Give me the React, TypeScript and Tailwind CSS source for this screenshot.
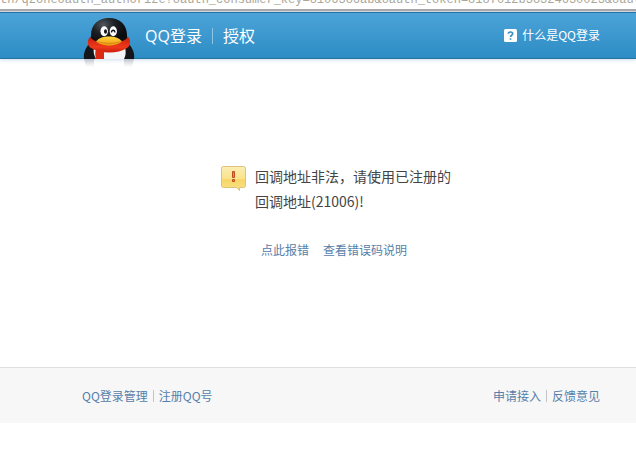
import type { ReactNode } from "react";

const requestUrl =
  "th/qzoneoauth_authorize?oauth_consumer_key=8106386ab&oauth_token=8187012b38324630023&oauth_";

const Penguin = () => (
  <svg viewBox="0 0 52 50" className="h-[50px] w-[52px] shrink-0" aria-hidden="true">
    <defs>
      <radialGradient id="head" cx="0.35" cy="0.22" r="0.6">
        <stop offset="0" stopColor="#50565e" />
        <stop offset="0.5" stopColor="#1d2024" />
        <stop offset="1" stopColor="#0b0c0f" />
      </radialGradient>
      <linearGradient id="scarf" x1="0" y1="0" x2="0" y2="1">
        <stop offset="0" stopColor="#c91d0c" />
        <stop offset="0.65" stopColor="#ee3a1c" />
        <stop offset="1" stopColor="#c91d0c" />
      </linearGradient>
      <linearGradient id="beak" x1="0" y1="0" x2="0" y2="1">
        <stop offset="0" stopColor="#ffd83f" />
        <stop offset="1" stopColor="#ee960f" />
      </linearGradient>
      <linearGradient id="reflection" x1="0" y1="0" x2="0" y2="1">
        <stop offset="0" stopColor="#9aa0a8" stopOpacity="0.5" />
        <stop offset="1" stopColor="#9aa0a8" stopOpacity="0" />
      </linearGradient>
    </defs>
    <path d="M7 25C3 29 0 35 1 41h50c1-6-2-12-6-16z" fill="#14161a" />
    <path d="M11 29h31c1 5 1 8-1 12H13c-2-4-3-7-2-12z" fill="#f4f5f7" />
    <path d="M26 0C15 0 8 7 8 17c0 3-1 3-1 5 0 3 3 7 6 8h26c3-1 6-5 6-8 0-2-1-2-1-5C44 7 37 0 26 0z" fill="url(#head)" />
    <path d="M7 19c-3 3-3 9 1 11 10 6 27 6 36 0 4-2 4-8 1-11-7 9-31 9-38 0z" fill="url(#scarf)" />
    <path d="M13 31c3 1 6 2 8 2v8h-8c-1-4-1-7 0-10z" fill="#dc2a12" />
    <path d="M13 23.500c3-4 8-5 13-5s10 1 13 5c-6 5.500-20 5.500-26 0z" fill="url(#beak)" />
    <path d="M14 23.500c8 2.500 16 2.500 24 0" fill="none" stroke="#b86a0c" strokeWidth=".5" />
    <ellipse cx="21.200" cy="13.300" rx="3.700" ry="5" fill="#fff" />
    <ellipse cx="30.300" cy="13.300" rx="3.600" ry="5" fill="#fff" />
    <ellipse cx="22.500" cy="13.500" rx="1.500" ry="2.300" fill="#101216" />
    <path d="M28.500 14.500c0-3 3.400-3 3.400 0" fill="none" stroke="#101216" strokeWidth="1.300" />
    <path d="M1 41h10v8H3zM41 41h10l-2 8h-8z" fill="url(#reflection)" />
  </svg>
);

const WarningIcon = () => (
  <svg viewBox="0 0 26 25" className="h-[25px] w-[26px] shrink-0" aria-hidden="true">
    <defs>
      <linearGradient id="bubble" x1="0" y1="0" x2="0" y2="1">
        <stop offset="0" stopColor="#fceeb4" />
        <stop offset="0.5" stopColor="#fae38b" />
        <stop offset="0.55" stopColor="#f5d667" />
        <stop offset="1" stopColor="#fae283" />
      </linearGradient>
    </defs>
    <path
      d="M2.500 .5h20a2 2 0 0 1 2 2v17a2 2 0 0 1-2 2h-4v3l-3-3h-13a2 2 0 0 1-2-2v-17a2 2 0 0 1 2-2z"
      fill="url(#bubble)"
      stroke="#dcc27d"
    />
    <path d="M11.500 5.500h2v6h-2zM11.500 13.500h2v2h-2z" fill="#f0853e" stroke="#bd4a22" />
  </svg>
);

const HelpIcon = () => (
  <svg viewBox="0 0 13 13" className="h-[13px] w-[13px] shrink-0" aria-hidden="true">
    <rect width="13" height="13" rx="1.500" fill="#fff" />
    <path
      d="M4.300 4.800C4.300 2.400 8.700 2.400 8.700 4.800c0 1.500-2.200 1.400-2.200 3.200M6.500 9.200v1.600"
      fill="none"
      stroke="#3a8fc4"
      strokeWidth="1.700"
    />
  </svg>
);

const TextLink = ({ children }: { children: ReactNode }) => (
  <a href="#" className="text-[#5680aa] hover:underline">
    {children}
  </a>
);

const Divider = () => <span className="mx-[5px] h-3 w-px bg-[#c4c4c4]" />;

export default function App() {
  return (
    <div className="bg-white font-['Noto_Sans_CJK_SC',sans-serif] text-xs leading-4">
      <div className="flex h-[9px] items-end overflow-hidden whitespace-nowrap bg-white pb-px font-['Liberation_Mono',monospace] text-[#aaa697]">
        {requestUrl}
      </div>
      <div className="h-[3px] border-b border-[#d0d0d2] bg-[#a5a4aa]" />

      <header className="flex h-[47px] items-start border-y border-[#24749f] bg-linear-to-b from-[#4ba3d9] to-[#2c8dc4] pr-9 pl-[83px] text-white shadow-[0_1px_4px_#cfdcf0]">
        <div className="flex pt-[5px]">
          <Penguin />
          <h1 className="ml-2.5 flex h-9 items-center font-['Open_Sans','Noto_Sans_CJK_SC',sans-serif] text-base">
            QQ登录
            <span className="mx-2.5 h-4 w-px bg-[#8ac5e6]" />
            授权
          </h1>
        </div>
        <a href="#" className="ml-auto flex h-11 items-center gap-[5px]">
          <HelpIcon />
          什么是QQ登录
        </a>
      </header>

      <main className="flex min-h-[308px] justify-center pt-[105px] pl-12">
        <div className="flex gap-2">
          <div className="pt-0.5">
            <WarningIcon />
          </div>
          <div>
            <p className="w-52 text-sm leading-[25px] text-[#444]">
              回调地址非法，请使用已注册的
              <br />
              回调地址(21006)!
            </p>
            <p className="mt-7 flex gap-3.5 pl-1.5">
              <TextLink>点此报错</TextLink>
              <TextLink>查看错误码说明</TextLink>
            </p>
          </div>
        </div>
      </main>

      <footer className="flex h-14 items-center justify-between border-t border-[#dedede] bg-[#f7f7f7] pr-9 pl-[82px]">
        <nav className="flex items-center">
          <TextLink>QQ登录管理</TextLink>
          <Divider />
          <TextLink>注册QQ号</TextLink>
        </nav>
        <nav className="flex items-center">
          <TextLink>申请接入</TextLink>
          <Divider />
          <TextLink>反馈意见</TextLink>
        </nav>
      </footer>
    </div>
  );
}
